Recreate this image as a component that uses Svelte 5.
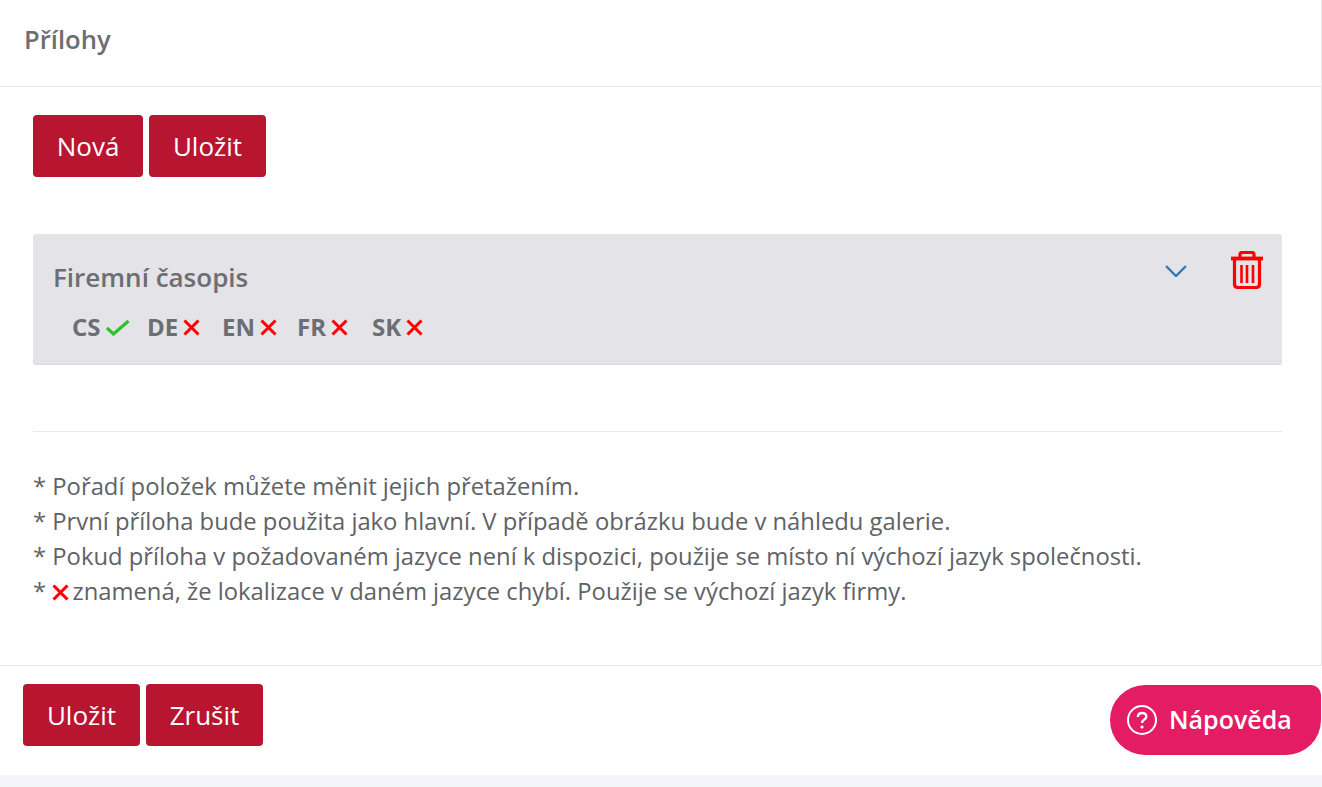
<script lang="ts">
	const langs = [
		{ code: 'CS', ok: true },
		{ code: 'DE', ok: false },
		{ code: 'EN', ok: false },
		{ code: 'FR', ok: false },
		{ code: 'SK', ok: false }
	];
</script>

{#snippet cross()}
	<svg class="cross" width="17" height="17" viewBox="0 0 17 17" fill="none" stroke="#f00" stroke-width="3"><path d="M1.500 1.500l14 14M15.500 1.500l-14 14" /></svg>
{/snippet}

<div class="page">
	<div class="card">
		<div class="card-header">Přílohy</div>
		<div class="card-body">
			<div class="actions">
				<button class="btn nova">Nová</button>
				<button class="btn">Uložit</button>
			</div>

			<div class="item">
				<div class="item-main">
					<div class="item-title">Firemní časopis</div>
					<div class="langs">
						{#each langs as lang}
							<span class="lang">
								<b>{lang.code}</b>
								{#if lang.ok}
									<svg class="check" width="24" height="17" viewBox="0 0 24 17" fill="none" stroke="#2ec02e" stroke-width="3.200"><path d="M1 9l6.500 6L22.500 2" /></svg>
								{:else}
									{@render cross()}
								{/if}
							</span>
						{/each}
					</div>
				</div>
				<svg class="chevron" width="22" height="12" viewBox="0 0 22 12" fill="none" stroke="#337ab7" stroke-width="2.400"><path d="M1 1l10 10L21 1" /></svg>
				<svg class="trash" width="32" height="38" viewBox="0 0 32 38" fill="none" stroke="#f00" stroke-width="3.200">
					<path d="M0 7.500h32" stroke-width="3.800" />
					<path d="M9 6V3.500q0-2 2-2h10q2 0 2 2V6" />
					<path d="M3.500 8v25q0 3.500 3.500 3.500h18q3.500 0 3.500-3.500V8" />
					<path d="M10.500 14v18M16 14v18M22 14v18" stroke-width="2.600" />
				</svg>
			</div>

			<hr />

			<div class="notes">
				<p>* Pořadí položek můžete měnit jejich přetažením.</p>
				<p>* První příloha bude použita jako hlavní. V případě obrázku bude v náhledu galerie.</p>
				<p>* Pokud příloha v požadovaném jazyce není k dispozici, použije se místo ní výchozí jazyk společnosti.</p>
				<p>* {@render cross()} znamená, že lokalizace v daném jazyce chybí. Použije se výchozí jazyk firmy.</p>
			</div>
		</div>
	</div>

	<div class="footer">
		<div class="footer-btns">
			<button class="btn">Uložit</button>
			<button class="btn">Zrušit</button>
		</div>
		<button class="help">
			<svg width="30" height="30" viewBox="0 0 30 30" fill="none" stroke="#fff" stroke-width="2"><circle cx="15" cy="15" r="14" /><path d="M10.800 12q.3-4 4.300-4t4.200 3.500q0 2-2.200 3.300t-2.100 3.200" stroke-width="2.400" /><circle cx="15" cy="22" r="1.600" fill="#fff" stroke="none" /></svg>
			Nápověda
		</button>
	</div>
	<div class="strip"></div>
</div>

<style>
	:global(body) {
		margin: 0;
		background: #fff;
	}
	.page {
		width: 1322px;
		height: 787px;
		display: flex;
		flex-direction: column;
		font-family: 'Open Sans', sans-serif;
		color: #6c6e72;
		overflow: hidden;
	}
	.card {
		height: 666px;
		box-sizing: border-box;
		border-right: 1px solid #e9e9ec;
		border-bottom: 1px solid #e9e9ec;
	}
	.card-header {
		height: 87px;
		box-sizing: border-box;
		padding: 22px 24px 0;
		font-size: 25.6px;
		line-height: 35px;
		font-weight: 600;
		border-bottom: 1px solid #e9e9ec;
	}
	.card-body {
		padding: 28px 39px 0 33px;
	}
	.actions {
		display: flex;
		gap: 6px;
	}
	.btn {
		height: 62px;
		width: 117px;
		padding: 0;
		border: 0;
		border-radius: 4px;
		background: #b81531;
		color: #fff;
		font-family: inherit;
		font-size: 26px;
	}
	.nova {
		width: 110px;
	}
	.item {
		margin-top: 57px;
		height: 131px;
		box-sizing: border-box;
		display: flex;
		align-items: flex-start;
		padding: 0 19px 0 20px;
		background: #e3e3e8;
		border-radius: 3px;
		border-bottom: 1px solid #d9d9de;
	}
	.item-main {
		flex: 1;
	}
	.item-title {
		margin-top: 25px;
		font-size: 26px;
		line-height: 36px;
		font-weight: 600;
	}
	.langs {
		display: grid;
		grid-template-columns: repeat(5, 75px);
		margin-top: 17px;
		padding-left: 19px;
	}
	.lang {
		display: flex;
		align-items: center;
		gap: 5px;
		font-size: 24px;
		line-height: 30px;
	}
	.lang b {
		font-weight: 700;
	}
	.chevron {
		margin-top: 31px;
		margin-right: 44px;
	}
	.trash {
		margin-top: 17px;
	}
	hr {
		margin: 66px 0 0;
		border: 0;
		border-top: 1px solid #e9e9ec;
	}
	.notes {
		margin-top: 37px;
		font-size: 23.8px;
		line-height: 35px;
		color: #606266;
	}
	.notes p {
		margin: 0;
	}
	.notes .cross {
		vertical-align: -1px;
		margin-right: -3px;
	}
	.footer {
		height: 109px;
		box-sizing: border-box;
		display: flex;
		justify-content: space-between;
		padding: 18px 1px 0 23px;
	}
	.footer-btns {
		display: flex;
		gap: 6px;
	}
	.help {
		margin-top: 1px;
		width: 211px;
		height: 70px;
		display: flex;
		align-items: center;
		gap: 12px;
		padding: 0 0 2px 17px;
		border: 0;
		border-radius: 35px 10px 35px 35px;
		background: #e31c63;
		color: #fff;
		font-family: inherit;
		font-size: 25px;
		font-weight: 600;
	}
	.help svg {
		margin-top: 2px;
	}
	.strip {
		flex: 1;
		background: #f4f5f9;
	}
</style>
